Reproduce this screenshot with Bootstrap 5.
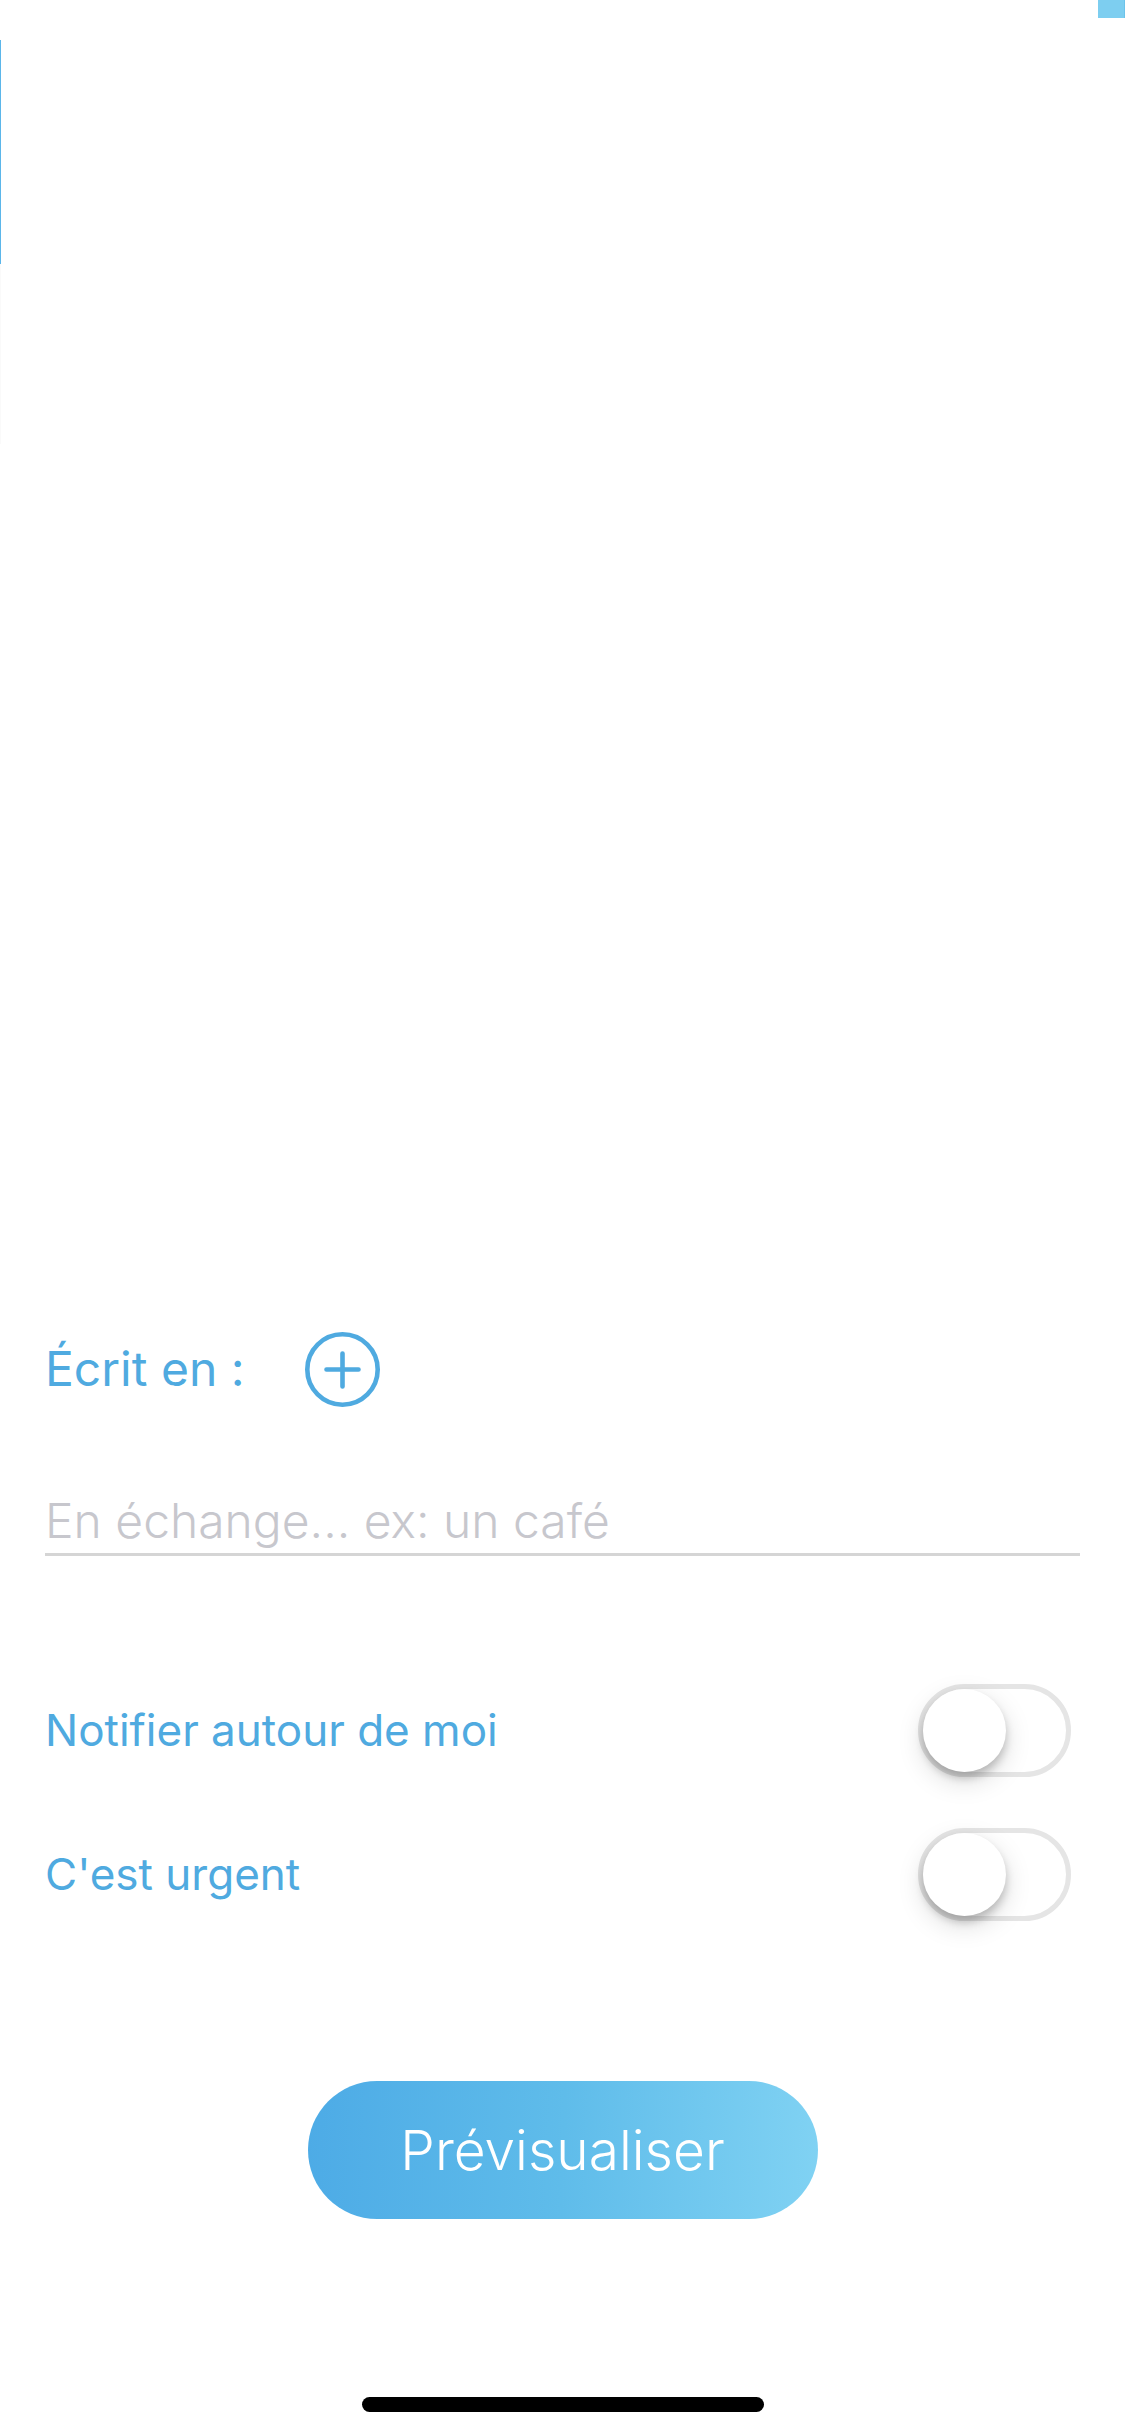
<!DOCTYPE html>
<html lang="fr">
<head>
<meta charset="utf-8">
<meta name="viewport" content="width=device-width, initial-scale=1">
<title>Prévisualiser</title>
<link href="https://cdn.jsdelivr.net/npm/bootstrap@5.3.0/dist/css/bootstrap.min.css" rel="stylesheet">
<style>
  body { background: #fff; color: #4faae0; font-family: Inter, "Liberation Sans", sans-serif; }
  .corner-tab { width: 27px; height: 18px; background: #7dcef0; border-right: 1px solid #6cc3ea; }
  .edge-strip { width: 1px; height: 224px; margin-top: 22px; background: #5bb6ea; }
  .edge-line { width: 1px; height: 180px; background: #fafafa; }
  .form-area { padding: 0 45px; }
  .lang-row { height: 76px; gap: 60px; font-size: 48px; line-height: 76px; }
  .add-btn { width: 75px; height: 75px; color: inherit; }
  .exchange { height: 72px; margin-top: 77px; padding: 3px 0 0; border: 0; border-bottom: 3px solid #d5d5d5; border-radius: 0; background: transparent; font-size: 48px; font-weight: 300; line-height: 66px; }
  .exchange:focus { background: transparent; box-shadow: none; border-color: #4faae0; }
  .exchange::placeholder { color: #c7c7cd; opacity: 1; }
  .options { margin-top: 128px; gap: 51px; padding-right: 9px; font-size: 44px; line-height: 93px; }
  .form-check-input.toggle { position: relative; width: 153px; height: 93px; margin: 0; border: 5px solid #e5e5e5; border-radius: 47px; background: none; }
  .form-check-input.toggle::before { content: ""; display: block; width: 83px; height: 83px; border-radius: 50%; background: #fff; box-shadow: 0 9px 27px rgba(0,0,0,.15), 0 6px 8px rgba(0,0,0,.2); }
  .form-check-input.toggle:checked { background: #4faae0; border-color: #4faae0; }
  .form-check-input.toggle:checked::before { margin-left: auto; }
  .preview-btn { width: 510px; height: 138px; margin-top: 160px; border: 0; color: #fff; font-size: 55px; font-weight: 300; background: linear-gradient(92deg, #4dabe6, #5fbcea 50%, #80d2f3); }
  .preview-btn:hover { color: #fff; }
  .home-bar { width: 402px; height: 15px; margin: 178px 0 24px; background: #000; }
</style>
</head>
<body>
<main class="d-flex flex-column min-vh-100">
  <div class="corner-tab align-self-end"></div>
  <div class="edge-strip"></div>
  <div class="edge-line"></div>

  <form class="form-area d-flex flex-column mt-auto">
    <div class="lang-row d-flex align-items-center">
      <span>Écrit en :</span>
      <button type="button" class="add-btn btn p-0 border-0 rounded-circle d-flex" aria-label="Ajouter une langue">
        <svg width="75" height="75" viewBox="0 0 75 75" fill="none" stroke="currentColor" aria-hidden="true">
          <circle cx="37.5" cy="37.5" r="35.2" stroke-width="4.6"/>
          <path d="M21.5 37.5h32M37.5 21.5v33" stroke-width="4.6" stroke-linecap="round"/>
        </svg>
      </button>
    </div>

    <input type="text" class="exchange form-control" placeholder="En échange... ex: un café" aria-label="En échange">

    <div class="options d-flex flex-column">
      <div class="d-flex align-items-center justify-content-between">
        <label for="notify">Notifier autour de moi</label>
        <input class="form-check-input toggle" type="checkbox" role="switch" id="notify">
      </div>
      <div class="d-flex align-items-center justify-content-between">
        <label for="urgent">C'est urgent</label>
        <input class="form-check-input toggle" type="checkbox" role="switch" id="urgent">
      </div>
    </div>

    <button type="submit" class="preview-btn btn rounded-pill align-self-center">Prévisualiser</button>
  </form>

  <div class="home-bar rounded-pill align-self-center"></div>
</main>
<script src="https://cdn.jsdelivr.net/npm/bootstrap@5.3.0/dist/js/bootstrap.bundle.min.js"></script>
</body>
</html>
